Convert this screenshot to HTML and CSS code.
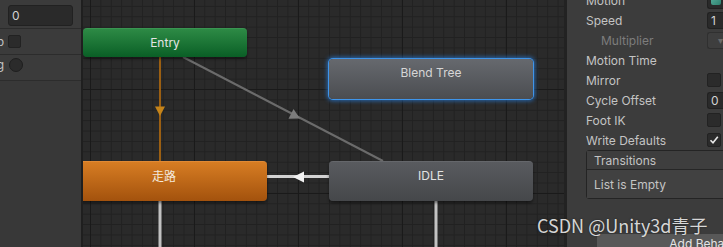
FILE: index.html
```html
<!DOCTYPE html>
<html lang="zh-CN">
<head>
<meta charset="utf-8">
<title>Animator</title>
<link rel="stylesheet" href="styles.css">
</head>
<body>
<div class="app">
  <aside class="left">
    <div class="lrow first"><div class="field">0</div></div>
    <div class="lrow second"><span class="lbl"><span>Loop</span></span><span class="check"></span></div>
    <div class="lrow third"><span class="lbl"><span>Mirroring</span></span><span class="radio"></span></div>
    <div class="lrest"></div>
  </aside>
  <main class="canvas">
    <svg class="links" width="481" height="247" viewBox="0 0 481 247">
      <line x1="77" y1="57" x2="77" y2="161" stroke="#9b5f12" stroke-width="2"/>
      <polygon points="72,106.5 82,106.5 77,116" fill="#c5841a"/>
      <line x1="100" y1="57" x2="300" y2="161" stroke="#6b6b6b" stroke-width="2"/>
      <polygon points="216.9,118.5 205.5,118.8 210.5,109" fill="#7c7c7c"/>
      <line x1="184" y1="176.5" x2="246" y2="176.5" stroke="#d2d2d2" stroke-width="3"/>
      <polygon points="210,177 221,171.5 221,182.5" fill="#f2f2f2"/>
      <line x1="77" y1="201" x2="77" y2="247" stroke="#c2c2c2" stroke-width="3"/>
      <line x1="353" y1="201" x2="353" y2="247" stroke="#c2c2c2" stroke-width="3"/>
    </svg>
    <div class="node entry">Entry</div>
    <div class="node blend">Blend Tree</div>
    <div class="node walk">走路</div>
    <div class="node idle">IDLE</div>
  </main>
  <aside class="inspector">
    <div class="prow first-row"><span class="plbl">Motion</span><span class="objfield"><span class="ico"></span></span></div>
    <div class="prow"><span class="plbl">Speed</span><span class="pfield">1</span></div>
    <div class="prow"><span class="plbl sub">Multiplier</span><span class="pdrop">▾</span></div>
    <div class="prow"><span class="plbl">Motion Time</span></div>
    <div class="prow"><span class="plbl">Mirror</span><span class="pcheck"></span></div>
    <div class="prow"><span class="plbl">Cycle Offset</span><span class="pfield">0</span></div>
    <div class="prow"><span class="plbl">Foot IK</span><span class="pcheck"></span></div>
    <div class="prow"><span class="plbl">Write Defaults</span><span class="pcheck on"><svg width="10" height="10" viewBox="0 0 10 10"><polyline points="1.5,5.2 4,7.8 8.8,1.8" fill="none" stroke="#e8e8e8" stroke-width="1.6"/></svg></span></div>
    <div class="tbox">
      <div class="thead">Transitions</div>
      <div class="tbody">List is Empty</div>
    </div>
    <div class="addbtn">Add Behaviour</div>
  </aside>
</div>
<div class="watermark">CSDN @Unity3d青子</div>
</body>
</html>
```
FILE: styles.css
```css
html, body {
  margin: 0;
  padding: 0;
  background: #383838;
}
body {
  position: relative;
  width: 723px;
  height: 247px;
  overflow: hidden;
  font-family: Inter, "Noto Sans", "Noto Sans CJK SC", sans-serif;
  font-size: 12px;
}
.app {
  display: flex;
  width: 723px;
  height: 247px;
  overflow: hidden;
}

/* left panel */
.left {
  width: 81px;
  flex: none;
  background: #383838;
  border-right: 2px solid #1f1f1f;
  display: flex;
  flex-direction: column;
}
.lrow {
  display: flex;
  background: #3b3b3b;
  border-bottom: 1px solid #2c2c2c;
  box-sizing: border-box;
}
.lrow.first { height: 29px; padding: 5px 8px 0 8px; }
.lrow.second { height: 26px; align-items: flex-start; padding-top: 6px; gap: 4px; }
.lrow.third { height: 26px; align-items: flex-start; padding-top: 3px; gap: 5px; }
.field {
  width: 65px;
  height: 21px;
  box-sizing: border-box;
  background: #2a2a2a;
  border: 1px solid #212121;
  border-radius: 3px;
  color: #d2d2d2;
  padding-left: 3px;
  line-height: 19px;
}
.lbl {
  width: 4px;
  height: 14px;
  display: flex;
  justify-content: flex-end;
  overflow: hidden;
  white-space: nowrap;
  color: #c4c4c4;
  line-height: 13px;
  flex: none;
}
.check {
  width: 13px;
  height: 13px;
  box-sizing: border-box;
  background: #2b2b2b;
  border: 1px solid #222;
  border-radius: 2px;
  flex: none;
}
.radio {
  width: 14px;
  height: 14px;
  box-sizing: border-box;
  background: #2b2b2b;
  border: 1px solid #1e1e1e;
  border-radius: 50%;
  flex: none;
}
.lrest { flex: 1; background: #383838; }

/* canvas */
.canvas {
  width: 481px;
  flex: none;
  position: relative;
  overflow: hidden;
  border-right: 3px solid #222;
  background-color: #2a2a2a;
  background-image:
    linear-gradient(to right, #1a1a1a 1px, transparent 1px),
    linear-gradient(to bottom, #1a1a1a 1px, transparent 1px),
    linear-gradient(to right, #212121 1px, transparent 1px),
    linear-gradient(to bottom, #212121 1px, transparent 1px);
  background-size: 104px 104px, 104px 104px, 10.4px 10.4px, 10.4px 10.4px;
  background-position: 7px 89px, 7px 89px, 7px 89px, 7px 89px;
}
.links {
  position: absolute;
  left: 0;
  top: 0;
}
.node {
  position: absolute;
  box-sizing: border-box;
  display: flex;
  justify-content: center;
  align-items: flex-start;
  line-height: 16px;
  border-radius: 4px;
  box-shadow: 0 2px 3px rgba(0, 0, 0, 0.45);
  font-family: Inter, "Noto Sans CJK SC", sans-serif;
  font-size: 12px;
}
.entry {
  left: 0;
  top: 28px;
  width: 164px;
  height: 29px;
  padding-top: 6px;
  color: #e4e4e4;
  background: linear-gradient(to bottom, #2d8a45, #0a5f26);
  border-top: 1px solid #3a9552;
}
.blend {
  left: 246px;
  top: 59px;
  width: 204px;
  height: 40px;
  padding-top: 6px;
  color: #d6d6d6;
  background: linear-gradient(to bottom, #66696e, #4b4d51);
  box-shadow: 0 0 0 1px #3f95ea, 0 0 4px 2px rgba(40, 130, 230, 0.7);
}
.idle {
  left: 246px;
  top: 161px;
  width: 204px;
  height: 40px;
  padding-top: 6px;
  color: #e2e2e2;
  background: linear-gradient(to bottom, #595b5f, #45474a);
  border-top: 1px solid #65676b;
}
.walk {
  left: -22px;
  top: 161px;
  width: 206px;
  height: 40px;
  padding-top: 6px;
  color: #f3e8dc;
  background: linear-gradient(to bottom, #d77d23, #a3520d);
  border-top: 1px solid #e08a35;
  font-family: "Noto Sans CJK SC", sans-serif;
}

/* inspector */
.inspector {
  flex: 1;
  min-width: 0;
  background: #3c3c3c;
  overflow: hidden;
  display: flex;
  flex-direction: column;
}
.prow {
  height: 20px;
  flex: none;
  display: grid;
  grid-template-columns: 140px 1fr;
  align-items: center;
}
.prow.first-row { margin-top: -10px; }
.plbl {
  padding-left: 19px;
  color: #c4c4c4;
  white-space: nowrap;
}
.plbl.sub {
  padding-left: 34px;
  color: #7d7d7d;
}
.pfield {
  height: 17px;
  box-sizing: border-box;
  background: #2a2a2a;
  border: 1px solid #212121;
  border-radius: 3px 0 0 3px;
  border-right: none;
  color: #d2d2d2;
  padding-left: 3px;
  line-height: 15px;
}
.pdrop {
  height: 17px;
  box-sizing: border-box;
  background: #3e3e3e;
  border: 1px solid #303030;
  border-right: none;
  border-radius: 3px 0 0 3px;
  color: #6a6a6a;
  font-size: 10px;
  line-height: 15px;
  padding-left: 10px;
}
.objfield {
  height: 17px;
  box-sizing: border-box;
  background: #2a2a2a;
  border: 1px solid #212121;
  border-right: none;
  border-radius: 3px 0 0 3px;
  display: flex;
  align-items: center;
  padding-left: 3px;
}
.ico {
  width: 10px;
  height: 10px;
  background: linear-gradient(135deg, #5ab3a0, #2e7f6e);
  border-radius: 2px;
}
.pcheck {
  width: 14px;
  height: 14px;
  box-sizing: border-box;
  background: #2b2b2b;
  border: 1px solid #222;
  border-radius: 2px;
  display: flex;
  align-items: center;
  justify-content: center;
}
.tbox {
  margin-left: 19px;
  width: 160px;
  box-sizing: border-box;
  border: 1px solid #242424;
  border-radius: 3px;
  flex: none;
}
.thead {
  height: 18px;
  line-height: 20px;
  padding-left: 7px;
  background: #3e3e3e;
  border-bottom: 1px solid #262626;
  color: #c4c4c4;
}
.tbody {
  height: 28px;
  line-height: 30px;
  padding-left: 7px;
  background: #414141;
  color: #c4c4c4;
}
.addbtn {
  margin-top: 35px;
  margin-left: 30px;
  width: 228px;
  height: 20px;
  flex: none;
  background: #585858;
  border-radius: 3px;
  color: #e4e4e4;
  text-align: center;
  line-height: 20px;
}

/* watermark */
.watermark {
  position: absolute;
  left: 537px;
  top: 215px;
  font-family: "Noto Sans CJK SC", "Noto Sans", sans-serif;
  font-size: 18px;
  line-height: 21px;
  color: rgba(240, 240, 240, 0.88);
  text-shadow: 0 0 2px rgba(0, 0, 0, 0.5);
  white-space: nowrap;
}
```
